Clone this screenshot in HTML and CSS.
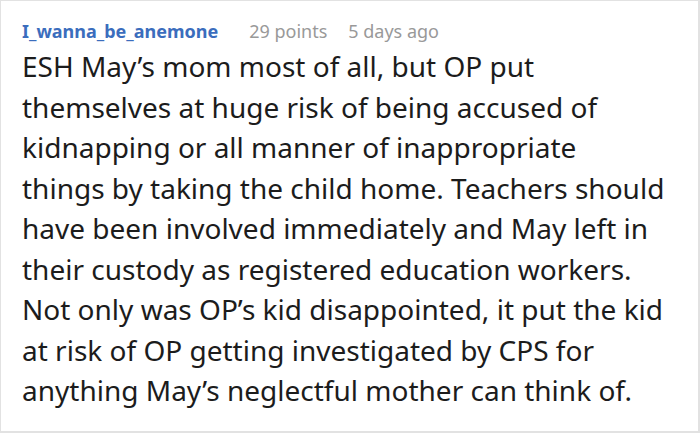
FILE: index.html
```html
<!DOCTYPE html>
<html>
<head>
<meta charset="utf-8">
<link rel="stylesheet" href="styles.css">
</head>
<body>
<div class="comment">
  <div class="meta">
    <span class="author">I_wanna_be_anemone</span>
    <span class="points">29 points</span>
    <span class="time">5 days ago</span>
  </div>
  <p class="text">ESH May’s mom most of all, but OP put<br>themselves at huge risk of being accused of<br>kidnapping or all manner of inappropriate<br>things by taking the child home. Teachers should<br>have been involved immediately and May left in<br>their custody as registered education workers.<br>Not only was OP’s kid disappointed, it put the kid<br>at risk of OP getting investigated by CPS for<br>anything May’s neglectful mother can think of.</p>
</div>
</body>
</html>
```
FILE: styles.css
```css
html, body {
  margin: 0;
  padding: 0;
  background: #fff;
}
.comment {
  box-sizing: border-box;
  width: 700px;
  height: 433px;
  border: 1px solid #e2e2e2;
  border-right-width: 2px;
  border-bottom-width: 2px;
  padding: 10px 4px 0 21px;
  font-family: "Noto Sans", "Open Sans", sans-serif;
  overflow: hidden;
}
.meta {
  display: flex;
  gap: 21px;
  font-size: 18px;
  line-height: 24px;
  color: #999;
  padding-top: 8px;
}
.author {
  color: #3b6dbd;
  font-weight: bold;
  margin-right: 10px;
}
.text {
  margin: 3px 0 0;
  font-size: 28px;
  line-height: 40.5px;
  color: #1c1c1c;
  white-space: nowrap;
}
```
